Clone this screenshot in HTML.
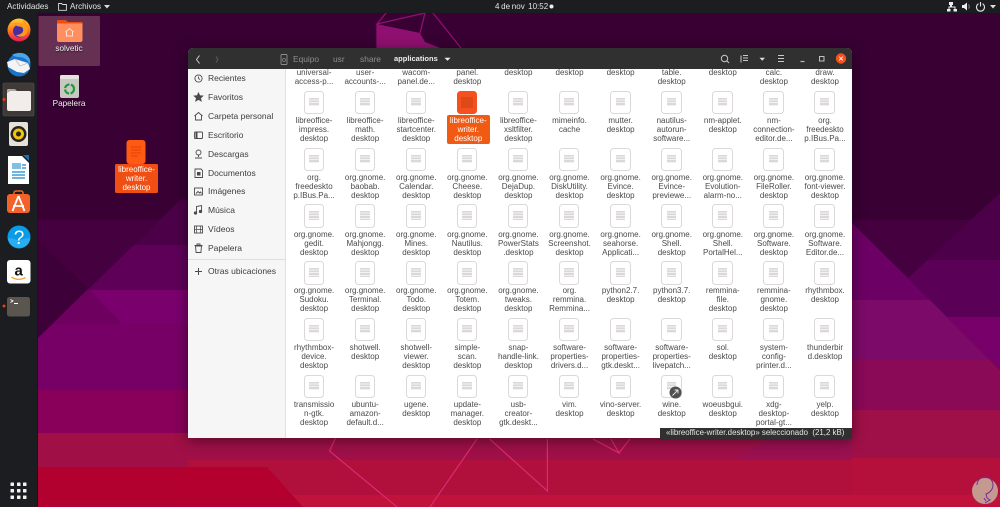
<!DOCTYPE html>
<html lang="es"><head><meta charset="utf-8"><title>Archivos</title>
<style>
*{box-sizing:border-box}
html,body{margin:0;padding:0;width:1000px;height:507px;overflow:hidden;background:#380033;font-family:"Liberation Sans",sans-serif}
.abs,#bg,#top,#dock,#win{position:absolute}
#bg{left:0;top:0}
#top{left:0;top:0;width:1000px;height:13px;background:#1b1d1f;color:#e4e4e4;font-size:8.1px;line-height:13px}
#top span{position:absolute;top:0;white-space:nowrap}
#dock{left:0;top:13px;width:37px;height:494px;background:#1b1d20}
#ds{position:absolute;left:0;top:0}
.dl{position:absolute;text-align:center;font-size:8.2px;line-height:9px;color:#f2f2f2;white-space:nowrap;text-shadow:0 1px 1px rgba(0,0,0,.6)}
#win{left:188px;top:48px;width:664px;height:390px;background:#fff;border-radius:5px 5px 0 0;box-shadow:0 3px 14px rgba(0,0,0,.45)}
#hd{position:absolute;left:0;top:0;width:664px;height:21px;background:#303030;border-radius:5px 5px 0 0;color:#8d8d8d;font-size:8.4px;line-height:22px}
#hd span{position:absolute;top:0;white-space:nowrap}
#side{position:absolute;left:0;top:21px;width:98px;height:369px;background:#f6f6f6;border-right:1px solid #e2e0dd;color:#3d3d3d;font-size:8.5px}
#side div{position:absolute;left:20px;line-height:10px;white-space:nowrap}
#side svg{position:absolute;left:0;top:0}
#main{position:absolute;left:99px;top:21px;width:565px;height:369px;overflow:hidden;background:#fff}
#grid{position:absolute;left:1.5px;top:-35.1px;display:grid;grid-template-columns:repeat(11,51.1px);grid-auto-rows:56.8px;filter:blur(.25px)}
.f{position:relative;text-align:center;font-size:8px;line-height:9px;color:#4a4a4a;white-space:nowrap}
.f i{display:block;position:absolute;left:15px;top:0;width:20.5px;height:23.5px;background:#fff;border:1.2px solid #dbd9d7;border-radius:3.5px}
.f i:after{content:"";position:absolute;left:4.5px;top:6px;width:9.5px;height:8.5px;background:repeating-linear-gradient(#dcd8d9 0 1.6px,#f3f2f2 1.6px 2.6px)}
.f b{display:block;font-weight:normal;padding-top:25.3px}
.f.s i{background:#f4511e;border:1px solid #f4511e}
.f.s i:after{left:3px;top:5px;width:12px;height:11px;background:#dd4a18}
.f.s b{position:absolute;left:5px;top:24px;width:43px;height:29px;padding:1px 0 0;background:#f15a13;color:#fff;border-radius:2px}
#tip{position:absolute;left:472px;top:380px;width:192px;height:10.5px;background:#303030;color:#e6e6e6;font-size:7.9px;line-height:10.5px;padding-left:6px;white-space:nowrap}
</style></head>
<body>
<svg id="bg" width="1000" height="507" viewBox="0 0 1000 507">
 <defs>
  <clipPath id="rup"><polygon points="908,278 1000,193 1000,370"/></clipPath>
  <clipPath id="rlo"><polygon points="852,223 908,278 1000,370 1000,507 852,507"/></clipPath>
  <clipPath id="llo"><polygon points="180,200 190,200 190,507 38,507 38,338"/></clipPath>
 </defs>
 <rect width="1000" height="507" fill="#380033"/>

 <polygon points="852,220 971,220 908,278 852,223" fill="#45003f"/>
 <g clip-path="url(#rup)">
  <rect x="852" y="190" width="148" height="70" fill="#4c0049"/>
  <rect x="852" y="260" width="148" height="57" fill="#5a0057"/>
  <rect x="852" y="317" width="148" height="60" fill="#77006a"/>
 </g>
 <g clip-path="url(#rlo)">
  <rect x="852" y="220" width="148" height="80" fill="#6c0064"/>
  <rect x="852" y="300" width="148" height="60" fill="#7c0a68"/>
  <rect x="852" y="360" width="148" height="50" fill="#8a0a58"/>
  <rect x="852" y="410" width="148" height="48" fill="#a01048"/>
  <rect x="852" y="458" width="148" height="37" fill="#b50f3c"/>
  <rect x="852" y="495" width="148" height="12" fill="#c0123a"/>
 </g>

 <polygon points="38,220 159,220 38,338" fill="#45003f"/>
 <polygon points="38,240 88,288 38,338" fill="#3e0038"/>
 <g clip-path="url(#llo)">
  <rect x="38" y="200" width="152" height="45" fill="#4c0048"/>
  <rect x="38" y="245" width="152" height="45" fill="#5e0058"/>
  <rect x="38" y="290" width="152" height="34" fill="#7a006e"/>
  <polygon points="88,288 122,324 38,330 38,338" fill="#6e0060"/>
  <rect x="38" y="324" width="152" height="66" fill="#770066"/>
  <rect x="38" y="390" width="152" height="43" fill="#88005a"/>
  <rect x="38" y="433" width="152" height="34" fill="#a00f45"/>
  <rect x="38" y="467" width="152" height="40" fill="#b2002f"/>
 </g>

 <rect x="188" y="400" width="664" height="60" fill="#a01048"/>
 <rect x="188" y="460" width="664" height="35" fill="#b10f3c"/>
 <rect x="188" y="495" width="664" height="12" fill="#c0123a"/>
 <polygon points="188,467 267,467 303,507 188,507" fill="#b4002f"/>
 <polygon points="732,460 852,460 852,438 770,438" fill="#9a1050"/>

 <polygon points="377,24 420,33 425,42 440,48 377,48" fill="#8f1070"/>
 <path d="M386,13 377,24 425,13 420,33 M433,13 461,48 M377,24 377,48" fill="none" stroke="#8f1070" stroke-width="1.3"/>
 <path d="M337,435 329.500,451 397,507 M477,439 430,507 M489.600,439 547.400,491 547.400,439 M593,439 619,453 611,439 M619,453 630,439" fill="none" stroke="#dc2a6e" stroke-width="1.200"/>
 <circle cx="985" cy="491" r="13" fill="#c49a90"/>
 <path d="M977,485c0-5 4-8 8-8s8,3 8,8-4,8-7,9l1,4 3,2-5,3M984,498l2,3" fill="none" stroke="#7a2a90" stroke-width="1"/>
 <rect x="38.500" y="16" width="61.500" height="50" rx="1" fill="#663052"/>
</svg>

<svg class="abs" style="left:50px;top:16px" width="40" height="90" viewBox="50 16 40 90">
 <path d="M57,22a2,2 0 0 1 2-2h6l3,2h13a1.500,1.500 0 0 1 1.500,1.500V40a2,2 0 0 1-2,2H59a2,2 0 0 1-2-2z" fill="#ff8f5f"/>
 <path d="M57,22a2,2 0 0 1 2-2h6l3,2h14.500v1.500H57z" fill="#ee4d10"/>
 <path d="M65.500,32l4-3.500 4,3.500M66.500,31v5h6v-5" fill="none" stroke="#ffe2d4" stroke-width="1"/>
 <rect x="60" y="75" width="19" height="23" rx="2" fill="#c9c7c1"/>
 <rect x="60" y="75" width="19" height="4" rx="1.500" fill="#e4e3df"/>
 <circle cx="69.500" cy="89" r="4.500" fill="none" stroke="#1e9a3c" stroke-width="2.200" stroke-dasharray="6 1.500"/>
</svg>
<div class="dl" style="left:48px;top:44px;width:42px">solvetic</div>
<div class="dl" style="left:48px;top:99px;width:42px">Papelera</div>

<svg class="abs" style="left:115px;top:138px" width="44" height="56" viewBox="115 138 44 56">
 <rect x="126.500" y="140" width="19" height="24" rx="3" fill="#ff5a14"/>
 <path d="M131,147h10M131,150h10M131,153h10M131,156h7" stroke="#e6490c" stroke-width="1.300"/>
 <rect x="115" y="164" width="43" height="29" rx="1.500" fill="#f04e13"/>
</svg>
<div class="dl" style="left:115px;top:165px;width:43px;color:#fff;text-shadow:none;font-size:8px">libreoffice-<br>writer.<br>desktop</div>

<div id="top">
 <span style="left:7px">Actividades</span>
 <svg class="abs" style="left:58px;top:2px" width="9" height="9" viewBox="0 0 9 9"><path d="M.6,1.500h3l1,1h3.800v5.800H.6z" fill="none" stroke="#ddd" stroke-width=".9"/></svg>
 <span style="left:70px">Archivos</span>
 <svg class="abs" style="left:104px;top:5px" width="6" height="4"><path d="M0,0H6L3,3.500z" fill="#ddd"/></svg>
 <span style="left:495px;font-size:8px;word-spacing:-.5px">4 de nov&nbsp; 10:52</span>
 <svg class="abs" style="left:549px;top:4px" width="5" height="5"><circle cx="2.500" cy="2.500" r="2" fill="#eee"/></svg>
 <svg class="abs" style="left:945px;top:1px" width="54" height="11" viewBox="0 0 54 11">
  <path d="M4,1h4v3h-1v1.500h3.500V8h1.500v2.500h-3.500V8h1v-1.500h-5V8h1v2.500H2V8h1.500V5.500H5V4H4z" fill="#eee"/>
  <path d="M17,4h2l3-2.500v8l-3-2.500h-2z" fill="#eee"/><path d="M23.500,3.500a3,3 0 0 1 0,4" fill="none" stroke="#888"/>
  <path d="M33.500,2.700a4,4 0 1 0 4,0M35.500,1v4.500" fill="none" stroke="#e4e4e4" stroke-width="1.100"/>
  <path d="M45,4h6L48,7.500z" fill="#ddd"/>
 </svg>
</div>

<div id="dock">
<svg id="ds" width="37" height="494" viewBox="0 13 37 494">
 <defs>
  <linearGradient id="ff" x1="0" y1="0" x2="0" y2="1"><stop offset="0" stop-color="#ffcf30"/><stop offset=".5" stop-color="#ff7a20"/><stop offset="1" stop-color="#e8185a"/></linearGradient>
 </defs>
 <circle cx="19" cy="30" r="11.500" fill="url(#ff)"/>
 <circle cx="19.500" cy="31" r="6.500" fill="#4a2da0"/>
 <path d="M9,25c3,-2 5,0 8,1s5,0 6,3 -2,6 -7,6c3,3 9,2 11,-2 2,-5 0,-11 -4,-14 1,3 0,5 -2,5 -3,-1 -5,-3 -12,1z" fill="#ff9a1e"/>
 <circle cx="19" cy="65" r="11.500" fill="#1c74c8"/>
 <path d="M12,55c3,-2 9,-3 13,-1 4,2 6,6 5,10 -2,-4 -6,-7 -11,-7 -3,0 -5,-1 -7,-2z" fill="#4aa7ea"/>
 <path d="M7,62l8,-3 13,4 2,6 -6,4 -7,-1 -9,-5z" fill="#f4f4f4"/>
 <path d="M15,59l5,7 8,-3" fill="none" stroke="#bcbcbc" stroke-width=".8"/>
 <rect x="3" y="83" width="31" height="33" rx="1.500" fill="#3f3a38" stroke="#565250" stroke-width=".6"/>
 <path d="M7,91a2,2 0 0 1 2-2h5l2,2h13.500a1.500,1.500 0 0 1 1.500,1.500V109a2,2 0 0 1-2,2H9a2,2 0 0 1-2-2z" fill="#f2ecea"/>
 <path d="M7,92a3,3 0 0 1 3-3h5l2,2h-7l-3,2z" fill="#a8a4a2"/>
 <circle cx="4" cy="99.500" r="1.500" fill="#e8400c"/>
 <rect x="9" y="122" width="19" height="24" rx="2" fill="#e6e2da"/>
 <circle cx="18.500" cy="134" r="8" fill="#26241f"/><circle cx="18.500" cy="134" r="5.500" fill="#f2c40c"/><circle cx="18.500" cy="134" r="2.500" fill="#26241f"/>
 <path d="M8,156h14l7,7v21H8z" fill="#fff"/>
 <path d="M23,155h6v6z" fill="#1b6fb5"/>
 <rect x="12" y="163" width="9" height="6" fill="#7ec0e8"/>
 <path d="M12,172h13M12,175h13M12,178h13M22,165h4M22,168h4" stroke="#1b86c8" stroke-width="1.300"/>
 <path d="M7,197a3,3 0 0 1 3-3h17a3,3 0 0 1 3,3v13a3,3 0 0 1-3,3H10a3,3 0 0 1-3-3z" fill="#f4622a"/>
 <path d="M14,194v-1a2,2 0 0 1 2-2h5a2,2 0 0 1 2,2v1" fill="none" stroke="#f4622a" stroke-width="1.500"/>
 <path d="M18.500,196l-6,15M18.500,196l6,15M13,206h11" stroke="#fff" stroke-width="1.800" fill="none"/>
 <circle cx="19" cy="237" r="11.500" fill="#0a9be6"/>
 <path d="M7.700,238.500c4-1.500 7.500,1.500 11.300,1.500s7.500-3 11.300-1.500a11.500,11.500 0 0 1-22.600,0z" fill="#28aef0"/>
 <text x="19" y="244" font-size="19" text-anchor="middle" font-family="Liberation Sans" fill="#fff">?</text>
 <rect x="7" y="260" width="23.500" height="23.500" rx="3" fill="#fff"/>
 <path d="M11.500,277c4,3 10,3 14,.5" fill="none" stroke="#f59a1a" stroke-width="1.200"/>
 <text x="18.700" y="275.500" font-size="15" font-weight="bold" text-anchor="middle" font-family="Liberation Sans" fill="#111">a</text>
 <rect x="7" y="297" width="23" height="19.500" rx="2.500" fill="#5a554f"/>
 <path d="M10.500,299.500l2.500,1.500-2.500,1.500" fill="none" stroke="#fff" stroke-width=".9"/><path d="M14,303.500h4" stroke="#fff"/>
 <circle cx="4" cy="306" r="1.500" fill="#e8400c"/>
 <g fill="#f2f2f2"><rect x="10.500" y="482.500" width="3.500" height="3.500" rx=".6"/><rect x="17" y="482.500" width="3.500" height="3.500" rx=".6"/><rect x="23" y="482.500" width="3.500" height="3.500" rx=".6"/><rect x="10.500" y="489" width="3.500" height="3.500" rx=".6"/><rect x="17" y="489" width="3.500" height="3.500" rx=".6"/><rect x="23" y="489" width="3.500" height="3.500" rx=".6"/><rect x="10.500" y="495.500" width="3.500" height="3.500" rx=".6"/><rect x="17" y="495.500" width="3.500" height="3.500" rx=".6"/><rect x="23" y="495.500" width="3.500" height="3.500" rx=".6"/></g>
</svg>
</div>

<div id="win">
 <div id="hd">
  <svg class="abs" style="left:0;top:0" width="664" height="21" viewBox="188 48 664 21">
   <path d="M199.500,55.500l-3,4 3,4" fill="none" stroke="#ccc" stroke-width="1"/>
   <path d="M216,56.500l2,3-2,3" fill="none" stroke="#5f5f5f" stroke-width="1"/>
   <rect x="281" y="54.500" width="6" height="10" rx="1" fill="none" stroke="#8d8d8d" stroke-width=".9"/><circle cx="284" cy="60" r="1.500" fill="none" stroke="#8d8d8d" stroke-width=".7"/>
   <path d="M444.500,57.800h6l-3,3z" fill="#eee"/>
   <circle cx="724.500" cy="58.500" r="3.200" fill="none" stroke="#c8c8c8" stroke-width="1"/><path d="M727,61l2,2" stroke="#c8c8c8"/>
   <path d="M741,55.500v7M743,55.500h5M743,58h5M743,60.500h5M741,62.500h0" stroke="#c8c8c8" stroke-width="1" fill="none"/>
   <path d="M759.500,57.800h5.500l-2.750,3z" fill="#ddd"/>
   <path d="M778,55.500h6M778,58.500h6M778,61.500h6" stroke="#c8c8c8" stroke-width="1"/>
   <path d="M800.500,61.500h4" stroke="#b8b8b8" stroke-width="1.200"/>
   <rect x="819.500" y="56.500" width="4.500" height="4.500" fill="none" stroke="#c0c0c0" stroke-width="1"/>
   <circle cx="841" cy="58.500" r="5.200" fill="#f4511e"/>
   <path d="M839.200,56.700l3.600,3.600M842.800,56.700l-3.600,3.600" stroke="#fff" stroke-width=".9"/>
  </svg>
  <span style="left:105px">Equipo</span>
  <span style="left:145px">usr</span>
  <span style="left:172px">share</span>
  <span style="left:206px;color:#eee;font-weight:bold;font-size:7.5px">applications</span>
 </div>

 <div id="side">
  <svg width="98" height="369" viewBox="188 69 98 369" fill="none" stroke="#4a4a4a" stroke-width=".9">
   <circle cx="198.500" cy="78.500" r="3.600"/><path d="M198.500,76.500v2l1.500,1"/>
   <path d="M198.500,93l1.200,2.700 3,.3-2.200,2 .7,3-2.700-1.600-2.700,1.600 .7-3-2.200-2 3-.3z" fill="#4a4a4a"/>
   <path d="M194.500,116l4-3.500 4,3.500M195.500,115.500v4.500h6v-4.500"/>
   <rect x="194.500" y="132" width="8" height="6.500" rx=".8"/><path d="M196.500,132v6.500" stroke-width="2"/>
   <circle cx="198.500" cy="152.500" r="2.500"/><path d="M198.500,155v2M195,158h7"/>
   <path d="M195,169h6l1.500,1.500v7H195z"/><rect x="197" y="172" width="3.500" height="3.500" fill="#4a4a4a" stroke="none"/>
   <rect x="194.500" y="188" width="8" height="7"/><path d="M196,193.500l2-2 1.500,1.500 1-1 1,1.500"/>
   <path d="M196.500,213v-6.500l5-1v6"/><circle cx="195.500" cy="213" r="1.200" fill="#4a4a4a"/><circle cx="200.500" cy="211.500" r="1.200" fill="#4a4a4a"/>
   <rect x="194.500" y="226" width="8" height="7"/><path d="M194.500,229.500h8M196.500,226v7M200.500,226v7" stroke-width=".7"/>
   <path d="M195.500,246h6l-.6,6.500h-4.800zM194.500,245.500h8M197,245v-1h3v1"/>
   <path d="M195,271.500h7M198.500,268v7" stroke-width="1"/>
   <path d="M188,259.500h97" stroke="#e0dedb" stroke-width="1"/>
  </svg>
  <div style="top:4px">Recientes</div>
  <div style="top:23px">Favoritos</div>
  <div style="top:42px">Carpeta personal</div>
  <div style="top:61px">Escritorio</div>
  <div style="top:80px">Descargas</div>
  <div style="top:99px">Documentos</div>
  <div style="top:117px">Imágenes</div>
  <div style="top:136px">Música</div>
  <div style="top:155px">Vídeos</div>
  <div style="top:174px">Papelera</div>
  <div style="top:197px">Otras ubicaciones</div>
 </div>

 <div id="main">
  <div id="grid">
   <div class="f"><i></i><b>&nbsp;<br>universal-<br>access-p...</b></div>
   <div class="f"><i></i><b>&nbsp;<br>user-<br>accounts-...</b></div>
   <div class="f"><i></i><b>&nbsp;<br>wacom-<br>panel.de...</b></div>
   <div class="f"><i></i><b>&nbsp;<br>panel.<br>desktop</b></div>
   <div class="f"><i></i><b>&nbsp;<br>desktop</b></div>
   <div class="f"><i></i><b>&nbsp;<br>desktop</b></div>
   <div class="f"><i></i><b>&nbsp;<br>desktop</b></div>
   <div class="f"><i></i><b>&nbsp;<br>table.<br>desktop</b></div>
   <div class="f"><i></i><b>&nbsp;<br>desktop</b></div>
   <div class="f"><i></i><b>&nbsp;<br>calc.<br>desktop</b></div>
   <div class="f"><i></i><b>&nbsp;<br>draw.<br>desktop</b></div>

   <div class="f"><i></i><b>libreoffice-<br>impress.<br>desktop</b></div>
   <div class="f"><i></i><b>libreoffice-<br>math.<br>desktop</b></div>
   <div class="f"><i></i><b>libreoffice-<br>startcenter.<br>desktop</b></div>
   <div class="f s"><i></i><b>libreoffice-<br>writer.<br>desktop</b></div>
   <div class="f"><i></i><b>libreoffice-<br>xsltfilter.<br>desktop</b></div>
   <div class="f"><i></i><b>mimeinfo.<br>cache</b></div>
   <div class="f"><i></i><b>mutter.<br>desktop</b></div>
   <div class="f"><i></i><b>nautilus-<br>autorun-<br>software...</b></div>
   <div class="f"><i></i><b>nm-applet.<br>desktop</b></div>
   <div class="f"><i></i><b>nm-<br>connection-<br>editor.de...</b></div>
   <div class="f"><i></i><b>org.<br>freedeskto<br>p.IBus.Pa...</b></div>

   <div class="f"><i></i><b>org.<br>freedeskto<br>p.IBus.Pa...</b></div>
   <div class="f"><i></i><b>org.gnome.<br>baobab.<br>desktop</b></div>
   <div class="f"><i></i><b>org.gnome.<br>Calendar.<br>desktop</b></div>
   <div class="f"><i></i><b>org.gnome.<br>Cheese.<br>desktop</b></div>
   <div class="f"><i></i><b>org.gnome.<br>DejaDup.<br>desktop</b></div>
   <div class="f"><i></i><b>org.gnome.<br>DiskUtility.<br>desktop</b></div>
   <div class="f"><i></i><b>org.gnome.<br>Evince.<br>desktop</b></div>
   <div class="f"><i></i><b>org.gnome.<br>Evince-<br>previewe...</b></div>
   <div class="f"><i></i><b>org.gnome.<br>Evolution-<br>alarm-no...</b></div>
   <div class="f"><i></i><b>org.gnome.<br>FileRoller.<br>desktop</b></div>
   <div class="f"><i></i><b>org.gnome.<br>font-viewer.<br>desktop</b></div>

   <div class="f"><i></i><b>org.gnome.<br>gedit.<br>desktop</b></div>
   <div class="f"><i></i><b>org.gnome.<br>Mahjongg.<br>desktop</b></div>
   <div class="f"><i></i><b>org.gnome.<br>Mines.<br>desktop</b></div>
   <div class="f"><i></i><b>org.gnome.<br>Nautilus.<br>desktop</b></div>
   <div class="f"><i></i><b>org.gnome.<br>PowerStats<br>.desktop</b></div>
   <div class="f"><i></i><b>org.gnome.<br>Screenshot.<br>desktop</b></div>
   <div class="f"><i></i><b>org.gnome.<br>seahorse.<br>Applicati...</b></div>
   <div class="f"><i></i><b>org.gnome.<br>Shell.<br>desktop</b></div>
   <div class="f"><i></i><b>org.gnome.<br>Shell.<br>PortalHel...</b></div>
   <div class="f"><i></i><b>org.gnome.<br>Software.<br>desktop</b></div>
   <div class="f"><i></i><b>org.gnome.<br>Software.<br>Editor.de...</b></div>

   <div class="f"><i></i><b>org.gnome.<br>Sudoku.<br>desktop</b></div>
   <div class="f"><i></i><b>org.gnome.<br>Terminal.<br>desktop</b></div>
   <div class="f"><i></i><b>org.gnome.<br>Todo.<br>desktop</b></div>
   <div class="f"><i></i><b>org.gnome.<br>Totem.<br>desktop</b></div>
   <div class="f"><i></i><b>org.gnome.<br>tweaks.<br>desktop</b></div>
   <div class="f"><i></i><b>org.<br>remmina.<br>Remmina...</b></div>
   <div class="f"><i></i><b>python2.7.<br>desktop</b></div>
   <div class="f"><i></i><b>python3.7.<br>desktop</b></div>
   <div class="f"><i></i><b>remmina-<br>file.<br>desktop</b></div>
   <div class="f"><i></i><b>remmina-<br>gnome.<br>desktop</b></div>
   <div class="f"><i></i><b>rhythmbox.<br>desktop</b></div>

   <div class="f"><i></i><b>rhythmbox-<br>device.<br>desktop</b></div>
   <div class="f"><i></i><b>shotwell.<br>desktop</b></div>
   <div class="f"><i></i><b>shotwell-<br>viewer.<br>desktop</b></div>
   <div class="f"><i></i><b>simple-<br>scan.<br>desktop</b></div>
   <div class="f"><i></i><b>snap-<br>handle-link.<br>desktop</b></div>
   <div class="f"><i></i><b>software-<br>properties-<br>drivers.d...</b></div>
   <div class="f"><i></i><b>software-<br>properties-<br>gtk.deskt...</b></div>
   <div class="f"><i></i><b>software-<br>properties-<br>livepatch...</b></div>
   <div class="f"><i></i><b>sol.<br>desktop</b></div>
   <div class="f"><i></i><b>system-<br>config-<br>printer.d...</b></div>
   <div class="f"><i></i><b>thunderbir<br>d.desktop</b></div>

   <div class="f"><i></i><b>transmissio<br>n-gtk.<br>desktop</b></div>
   <div class="f"><i></i><b>ubuntu-<br>amazon-<br>default.d...</b></div>
   <div class="f"><i></i><b>ugene.<br>desktop</b></div>
   <div class="f"><i></i><b>update-<br>manager.<br>desktop</b></div>
   <div class="f"><i></i><b>usb-<br>creator-<br>gtk.deskt...</b></div>
   <div class="f"><i></i><b>vim.<br>desktop</b></div>
   <div class="f"><i></i><b>vino-server.<br>desktop</b></div>
   <div class="f"><i></i><b>wine.<br>desktop</b>
    <svg class="abs" style="left:23px;top:11px" width="13" height="13" viewBox="0 0 13 13"><circle cx="6.500" cy="6.500" r="6" fill="#505050"/><path d="M3.500,9.500l5-5M5.500,4h3.500v3.500" fill="none" stroke="#e8e8e8" stroke-width=".9"/></svg></div>
   <div class="f"><i></i><b>woeusbgui.<br>desktop</b></div>
   <div class="f"><i></i><b>xdg-<br>desktop-<br>portal-gt...</b></div>
   <div class="f"><i></i><b>yelp.<br>desktop</b></div>
  </div>
 </div>
 <div id="tip">«libreoffice-writer.desktop» seleccionado&nbsp; (21,2 kB)</div>
</div>
</body></html>
